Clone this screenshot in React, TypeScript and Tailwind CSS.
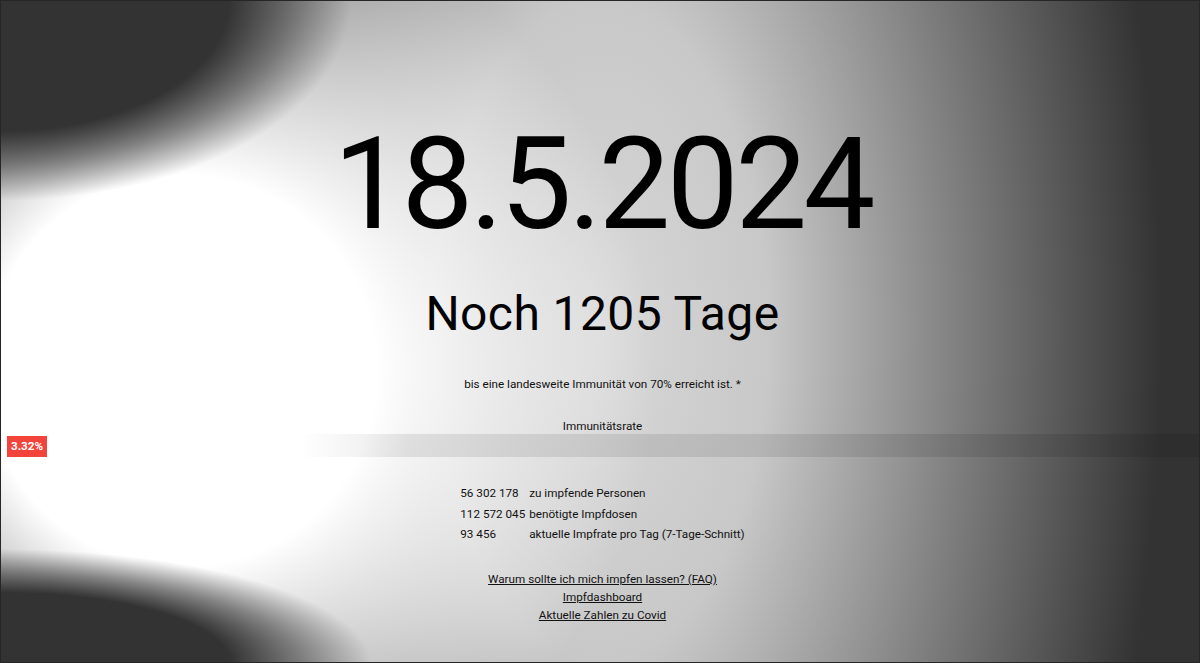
import React from 'react';

const stats = [
  { value: '56 302 178', label: 'zu impfende Personen' },
  { value: '112 572 045', label: 'benötigte Impfdosen' },
  { value: '93 456', label: 'aktuelle Impfrate pro Tag (7-Tage-Schnitt)' },
];

const links = [
  'Warum sollte ich mich impfen lassen? (FAQ)',
  'Impfdashboard',
  'Aktuelle Zahlen zu Covid',
];

const App: React.FC = () => {
  return (
    <div className="min-h-screen w-full overflow-hidden border border-[#262626] font-['Roboto',sans-serif] text-[#111] bg-[radial-gradient(ellipse_350px_200px_at_0px_0px,#333_65%,rgba(51,51,51,0.55)_82%,rgba(51,51,51,0)_100%),radial-gradient(ellipse_370px_115px_at_0px_663px,#333_62%,rgba(51,51,51,0.55)_80%,rgba(51,51,51,0)_100%),radial-gradient(ellipse_560px_560px_at_180px_370px,#fff_35%,rgba(255,255,255,0)_85%),radial-gradient(ellipse_560px_1100px_at_600px_330px,#d8d8d8_0%,#c8c8c8_30%,#333_100%)]">
      <div className="flex flex-col items-center pl-[5px]">
        <h1 className="pt-[119px] text-[128px] leading-[128px] font-normal tracking-[-3.6px] text-black">
          18.5.2024
        </h1>

        <h2 className="mt-[42px] text-[48px] leading-[48px] font-normal tracking-[0.4px] text-black">
          Noch 1205 Tage
        </h2>

        <p className="mt-[38px] text-[11.7px] leading-[16px]">
          bis eine landesweite Immunität von 70% erreicht ist. *
        </p>

        <p className="mt-[26px] text-[11.7px] leading-[16px]">Immunitätsrate</p>

        <div className="relative -ml-[5px] h-[23px] w-[calc(100%+5px)] bg-[linear-gradient(to_right,rgba(0,0,0,0)_25%,rgba(0,0,0,0.09)_34%,rgba(0,0,0,0.1)_100%)]">
          <span className="absolute left-[6px] top-[2px] flex h-[21px] items-center bg-[#f2443a] px-[4px] text-[11.7px] font-bold text-white">
            3.32%
          </span>
        </div>

        <div className="mt-[26px] grid grid-cols-[auto_auto] gap-x-[4px] text-[11.7px] leading-[20.5px]">
          {stats.map((s) => (
            <React.Fragment key={s.label}>
              <span>{s.value}</span>
              <span>{s.label}</span>
            </React.Fragment>
          ))}
        </div>

        <div className="mt-[25px] flex flex-col items-center text-[11.7px] leading-[18px]">
          {links.map((l) => (
            <a key={l} href="#" className="underline text-[#111]">
              {l}
            </a>
          ))}
        </div>
      </div>
    </div>
  );
};

export default App;
